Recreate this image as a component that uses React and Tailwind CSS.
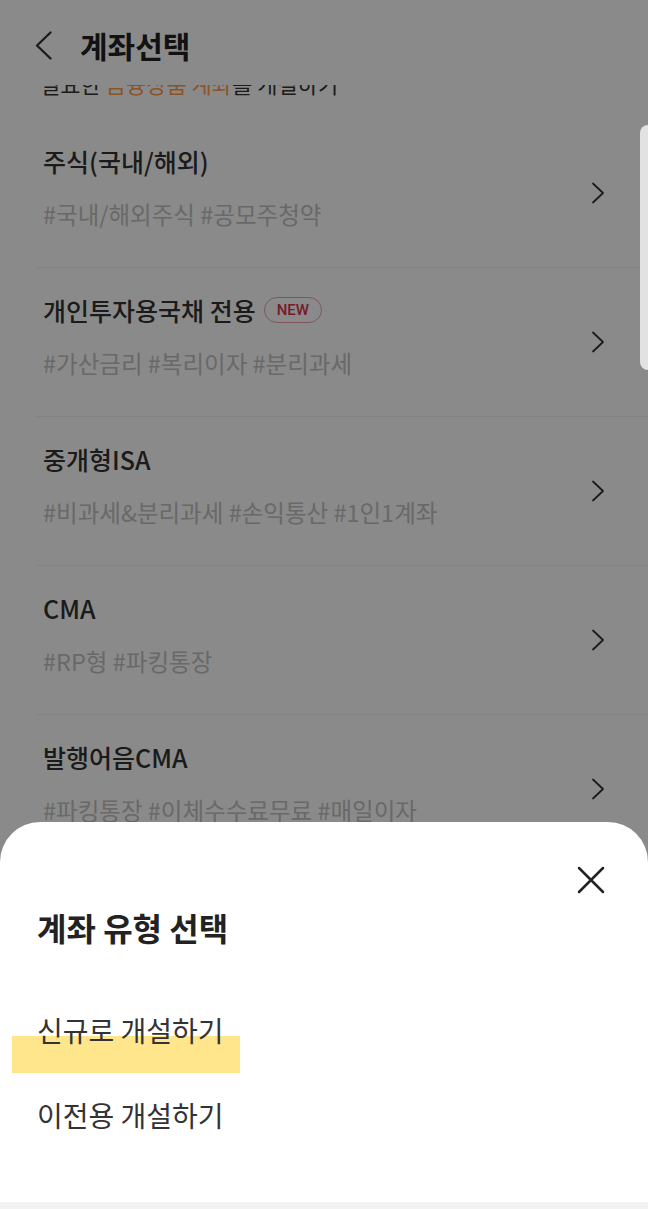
import React from 'react'

const rows = [
  { title: '주식(국내/해외)', tags: '#국내/해외주식 #공모주청약' },
  { title: '개인투자용국채 전용', tags: '#가산금리 #복리이자 #분리과세', isNew: true },
  { title: '중개형ISA', tags: '#비과세&분리과세 #손익통산 #1인1계좌' },
  { title: 'CMA', tags: '#RP형 #파킹통장' },
  { title: '발행어음CMA', tags: '#파킹통장 #이체수수료무료 #매일이자' },
]

function Chevron() {
  return (
    <svg width="14" height="22" viewBox="0 0 14 22" fill="none" className="flex-shrink-0">
      <path d="M2 1.5 L12 11 L2 20.5" stroke="#333" strokeWidth="1.8" strokeLinecap="round" strokeLinejoin="round" />
    </svg>
  )
}

export default function App() {
  return (
    <div className="relative w-[648px] h-[1209px] overflow-hidden bg-white font-['Noto_Sans_CJK_KR','Noto_Sans',sans-serif] text-[#333]">
      {/* Header */}
      <div className="h-[85px] flex items-center pt-[5px] pl-[35px] gap-[28px]">
        <svg width="17" height="29" viewBox="0 0 17 29" fill="none">
          <path d="M15.5 1.5 L2 14.5 L15.5 27.5" stroke="#333" strokeWidth="2.3" strokeLinecap="round" strokeLinejoin="round" />
        </svg>
        <h1 className="text-[30px] font-bold text-[#222] leading-none">계좌선택</h1>
      </div>

      {/* intro line, scrolled under header */}
      <div className="h-[34px] overflow-hidden">
        <p className="pl-[40px] text-[22px] leading-[34px] -mt-[19px] text-[#333]">
          필요한 <span className="text-[#ff9a4a]">금융상품 계좌</span>를 개설하기
        </p>
      </div>

      {/* Account list */}
      <div>
        {rows.map(r => (
          <div key={r.title} className="ml-[37px] border-b border-[#f2f2f2] pl-[6px] pr-[43px] flex items-center h-[149px]">
            <div className="flex-1 pt-[26px] pb-[38px]">
              <div className="flex items-center gap-[8px]">
                <p className="text-[25px] leading-[32px] font-medium text-[#333]">{r.title}</p>
                {r.isNew && (
                  <span className="h-[26px] px-[12px] rounded-full border border-[#eca0a8] text-[#d8344a] text-[15px] font-medium leading-[24px] font-['Roboto',sans-serif]">NEW</span>
                )}
              </div>
              <p className="mt-[21px] text-[23.5px] leading-[32px] text-[#c2c2c2]">{r.tags}</p>
            </div>
            <Chevron />
          </div>
        ))}
      </div>

      {/* dim overlay */}
      <div className="absolute inset-0 bg-black/[0.46]" />

      {/* scroll indicator */}
      <div className="absolute right-0 top-[125px] w-[8px] h-[245px] rounded-l-[8px] bg-[#e2e2e2]" />

      {/* Bottom sheet */}
      <div className="absolute left-0 right-0 bottom-0 h-[387px] bg-white rounded-t-[40px] flex flex-col">
        <div className="flex justify-end pt-[44px] pr-[43px]">
          <svg width="28" height="28" viewBox="0 0 28 28" fill="none">
            <path d="M2 2 L26 26 M26 2 L2 26" stroke="#222" strokeWidth="2.5" strokeLinecap="round" />
          </svg>
        </div>
        <h2 className="mt-[13px] pl-[37px] text-[32px] leading-[40px] font-bold text-[#222]">계좌 유형 선택</h2>
        <div className="relative mt-[63px] ml-[37px]">
          <div className="absolute -left-[25px] top-[26px] w-[228px] h-[37px] bg-[#ffe68c]" />
          <p className="relative text-[28px] leading-[40px] text-[#333]">신규로 개설하기</p>
        </div>
        <p className="mt-[45px] ml-[37px] text-[28px] leading-[40px] text-[#333]">이전용 개설하기</p>
        <div className="mt-auto h-[7px] bg-[#f2f2f2]" />
      </div>
    </div>
  )
}
